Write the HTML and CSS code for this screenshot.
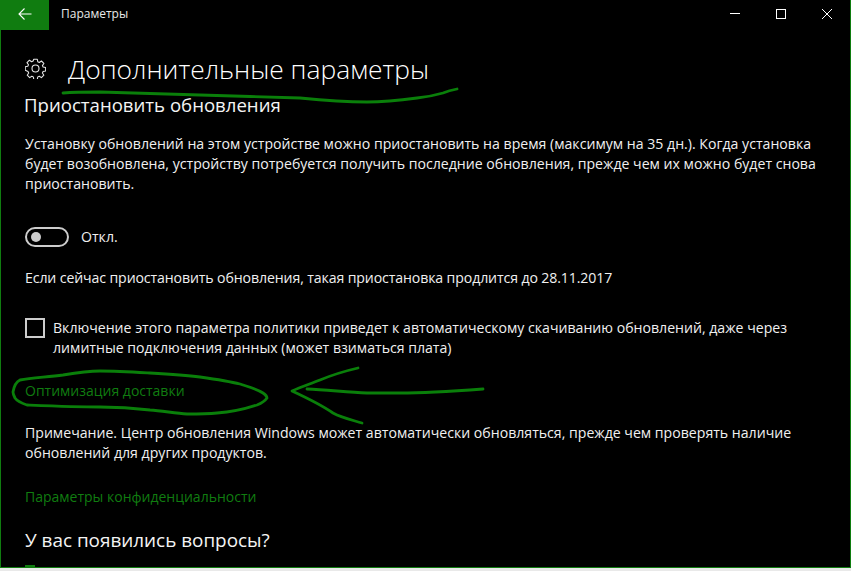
FILE: index.html
```html
<!DOCTYPE html>
<html lang="ru">
<head>
<meta charset="utf-8">
<title>Параметры</title>
<link rel="stylesheet" href="styles.css">
</head>
<body>
<div class="window">
  <header class="titlebar">
    <button class="back" aria-label="Назад">
      <svg width="14" height="12" viewBox="0 0 14 12"><path d="M6.500.5 1 6l5.500 5.500M1 6h12.500" fill="none" stroke="#fff" stroke-width="1.100"/></svg>
    </button>
    <span class="apptitle">Параметры</span>
    <div class="controls">
      <span class="ctl"><svg width="10" height="10" viewBox="0 0 10 10"><path d="M0 4.500h10" stroke="#fff" fill="none"/></svg></span>
      <span class="ctl"><svg width="10" height="10" viewBox="0 0 10 10"><rect x=".5" y=".5" width="9" height="9" stroke="#fff" fill="none"/></svg></span>
      <span class="ctl"><svg width="10" height="10" viewBox="0 0 10 10"><path d="M0 0l10 10M10 0 0 10" stroke="#fff" fill="none"/></svg></span>
    </div>
  </header>
  <main class="content">
    <div class="pagehead">
      <svg class="gear" width="21" height="21" viewBox="0 0 21 21"><g fill="none" stroke="#e6e6e6" stroke-width="1.100" stroke-linejoin="round"><path d="M8.700 1h3.600l.5 2.600 1.500.7 2.200-1.500 2.500 2.500-1.500 2.200.7 1.500 2.600.5v3.600l-2.600.5-.7 1.500 1.500 2.200-2.500 2.500-2.200-1.500-1.500.7-.5 2.600H8.700l-.5-2.600-1.500-.7-2.200 1.500-2.500-2.500 1.500-2.200-.7-1.500L0 12.300V8.700l2.600-.5.7-1.500-1.500-2.200 2.500-2.500 2.200 1.500 1.500-.7z" transform="translate(.25 .25) scale(.98)"/><circle cx="10.500" cy="10.500" r="3.500"/></g></svg>
      <h1>Дополнительные параметры</h1>
    </div>
    <h2 class="sub pause">Приостановить обновления</h2>
    <p class="text intro">Установку обновлений на этом устройстве можно приостановить на время (максимум на 35 дн.). Когда установка будет возобновлена, устройству потребуется получить последние обновления, прежде чем их можно будет снова приостановить.</p>
    <div class="toggle-row">
      <span class="toggle"><span class="knob"></span></span>
      <span class="text">Откл.</span>
    </div>
    <p class="text until">Если сейчас приостановить обновления, такая приостановка продлится до 28.11.2017</p>
    <div class="check-row">
      <span class="checkbox"></span>
      <p class="text">Включение этого параметра политики приведет к автоматическому скачиванию обновлений, даже через лимитные подключения данных (может взиматься плата)</p>
    </div>
    <a class="link delivery">Оптимизация доставки</a>
    <p class="text note">Примечание. Центр обновления Windows может автоматически обновляться, прежде чем проверять наличие обновлений для других продуктов.</p>
    <a class="link privacy">Параметры конфиденциальности</a>
    <h2 class="sub questions">У вас появились вопросы?</h2>
    <span class="stub"></span>
  </main>
  <svg class="ink" width="851" height="571" viewBox="0 0 851 571" fill="none" stroke="#0a7f0a" stroke-width="2.800" stroke-linecap="round" stroke-linejoin="round">
    <path d="M63 93C75 92 88 92 100 92 135 93 165 94 200 95 235 96 265 97 300 98 320 100 345 102 367 102 385 102 402 100 417 98 428 97 436 95 443 93 448 91 452 90 457 89"/>
    <path d="M13 392C14 386 16 382 20 380 32 378 48 377 63 375 75 373 88 371 100 371 117 371 133 372 150 373 167 374 184 375 200 377 214 379 228 381 240 384 249 387 257 389 263 393 266 395 267 396 267 398 265 401 262 403 257 405 245 409 232 412 217 413 207 414 197 414 187 414 175 413 162 411 150 410 133 408 117 407 100 407 76 407 52 406 27 405 21 403 17 401 15 398 14 396 13 394 13 392Z"/>
    <path d="M358 368C345 371 332 375 320 380 310 384 301 387 292 391 305 397 320 404 333 413 342 418 352 420 362 423"/>
    <path d="M307 389C327 390 347 392 367 393 378 393 389 393 400 393 428 393 456 391 483 389"/>
  </svg>
</div>
</body>
</html>
```
FILE: styles.css
```css
* { box-sizing: border-box; }
html, body { margin: 0; height: 100%; background: #e9e9e9; overflow: hidden; }
.window {
  position: relative;
  width: 851px;
  height: 568px;
  background: #000;
  border-left: 1px solid #107c10;
  border-right: 1px solid #107c10;
  border-bottom: 1px solid #107c10;
  overflow: hidden;
  font-family: "Open Sans", "Noto Sans", sans-serif;
  color: #fff;
}
.titlebar { display: flex; align-items: flex-start; height: 30px; }
.back {
  width: 48px; height: 30px; border: 0; padding: 0 0 2px;
  background: #107c10;
  display: flex; align-items: center; justify-content: center;
}
.apptitle { margin-left: 12px; font-size: 12px; line-height: 28px; color: #e8e8e8; }
.controls { margin-left: auto; display: flex; }
.ctl { width: 46px; height: 28px; display: flex; align-items: center; justify-content: center; }
.content { padding: 0 0 0 24px; }
.pagehead { display: flex; align-items: center; height: 48px; margin-top: 15px; }
.gear { margin-bottom: 1px; }
h1 { margin: 0 0 0 22px; font-size: 26.4px; font-weight: 300; line-height: 48px; color: #fff; white-space: nowrap; }
.sub { margin: 0; font-size: 18.6px; font-weight: 400; line-height: 24px; color: #f4f4f4; white-space: nowrap; }
.pause { margin-left: -1px; }
.text { margin: 0; font-size: 14.12px; line-height: 20px; color: #f0f0f0; }
.intro { margin-top: 17px; width: 825px; }
.toggle-row { display: flex; align-items: center; margin-top: 33px; height: 20px; gap: 12px; }
.toggle { width: 44px; height: 20px; border: 2px solid #ccc; border-radius: 10px; display: flex; align-items: center; padding-left: 4px; }
.knob { width: 10px; height: 10px; border-radius: 50%; background: #ccc; }
.until { margin-top: 21px; letter-spacing: -.11px; }
.check-row { display: flex; gap: 8px; margin-top: 30px; }
.checkbox { flex: none; width: 20px; height: 20px; border: 2px solid #ccc; }
.check-row .text { width: 770px; }
.link { display: block; font-size: 14px; line-height: 20px; color: #107c10; }
.delivery { margin-top: 23px; }
.note { margin-top: 22px; width: 825px; }
.privacy { margin-top: 24px; }
.sub.questions { margin-top: 21px; font-size: 18.9px; }
.stub { display: block; width: 10px; height: 3px; background: #107c10; margin-top: 13px; }
.ink { position: absolute; left: -1px; top: 0; pointer-events: none; }
```
